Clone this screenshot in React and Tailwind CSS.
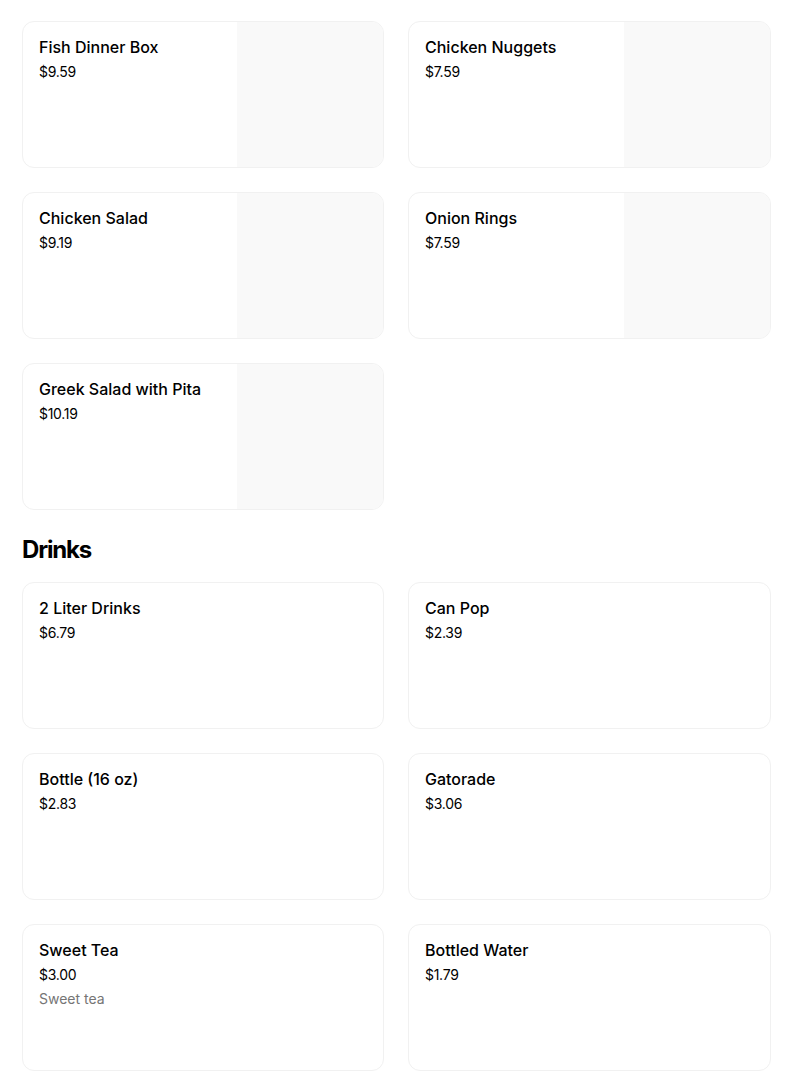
import React from 'react'

const meals = [
  { name: 'Fish Dinner Box', price: '$9.59', image: true },
  { name: 'Chicken Nuggets', price: '$7.59', image: true },
  { name: 'Chicken Salad', price: '$9.19', image: true },
  { name: 'Onion Rings', price: '$7.59', image: true },
  { name: 'Greek Salad with Pita', price: '$10.19', image: true }
]

const drinks = [
  { name: '2 Liter Drinks', price: '$6.79' },
  { name: 'Can Pop', price: '$2.39' },
  { name: 'Bottle (16 oz)', price: '$2.83' },
  { name: 'Gatorade', price: '$3.06' },
  { name: 'Sweet Tea', price: '$3.00', desc: 'Sweet tea' },
  { name: 'Bottled Water', price: '$1.79' }
]

function ItemCard({ item }) {
  return (
    <div className="flex h-[147px] overflow-hidden rounded-xl border border-[#f1f1f1] bg-white">
      <div className="flex-1 px-4 pt-[13px]">
        <div className="text-[16px] leading-[24px] font-medium text-black">{item.name}</div>
        <div className="mt-[3px] text-[14px] leading-[20px] tracking-[-0.02em] text-black">{item.price}</div>
        {item.desc && <div className="mt-1 text-[14px] leading-[20px] text-[#757575]">{item.desc}</div>}
      </div>
      {item.image && <div className="w-[146px] bg-[#f9f9f9]" />}
    </div>
  )
}

export default function App() {
  return (
    <div className="min-h-screen bg-white pl-[22px] pt-[21px] font-['Inter',sans-serif]">
      <div className="w-[749px]">
        <div className="grid grid-cols-[362px_363px] gap-6">
          {meals.map((m) => (
            <ItemCard key={m.name} item={m} />
          ))}
        </div>
        <h2 className="mt-6 mb-4 text-[24px] leading-[32px] font-bold tracking-[-0.05em] text-black">Drinks</h2>
        <div className="grid grid-cols-[362px_363px] gap-6">
          {drinks.map((d) => (
            <ItemCard key={d.name} item={d} />
          ))}
        </div>
      </div>
    </div>
  )
}
